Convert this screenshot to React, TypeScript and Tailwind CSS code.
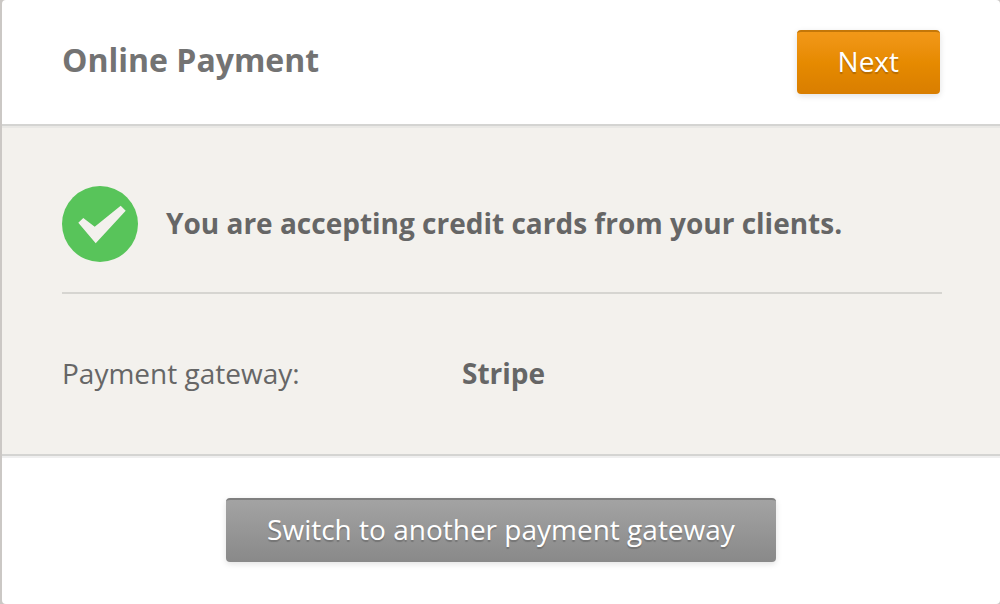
function CheckBadge() {
  return (
    <svg viewBox="0 0 76 76" className="size-[76px] shrink-0" aria-hidden="true">
      <circle cx="38" cy="38" r="38" fill="#58c45a" />
      <path d="M16.3 36.7 21.3 32 32.7 40.7 58.7 19.7 63.7 24.7 33.7 57.3Z" fill="#f3f1ed" />
    </svg>
  );
}

const buttonBase =
  'h-16 px-[41px] pb-1 rounded-[4px] border-t-2 bg-linear-to-b text-[28px] leading-[38px] text-white cursor-pointer shadow-[0_2px_6px_rgba(0,0,0,0.12)] text-shadow-[0_2px_1px_rgba(0,0,0,0.2)]';

export default function App() {
  return (
    <div className="min-h-screen bg-[#cbc8c5] pl-0.5 font-['Open_Sans','Noto_Sans',sans-serif] text-[28px] leading-[38px] text-[#666666]">
      <main className="min-h-screen overflow-hidden rounded-[4px] bg-white">
        {/* Header */}
        <header className="flex items-center justify-between px-[60px] py-[30px]">
          <h1 className="pb-1 text-[32px] leading-[44px] font-bold text-[#737373]">Online Payment</h1>
          <button
            type="button"
            className={`${buttonBase} border-[#c47708] from-[#f29818] via-[#e68a00] to-[#d97e00]`}
          >
            Next
          </button>
        </header>

        {/* Gateway status */}
        <section className="border-y-2 border-[#d4d4d2] bg-[#f3f1ed] pt-[60px] pr-[58px] pb-[62px] pl-[60px] shadow-[inset_0_2px_0_#e9e8e5,0_2px_0_#efefef]">
          <div className="flex items-center gap-7 border-b-2 border-[#d6d5d1] pb-[30px]">
            <CheckBadge />
            <p className="pb-0.5 font-bold">You are accepting credit cards from your clients.</p>
          </div>
          <dl className="flex pt-[60px]">
            <dt className="w-[400px]">Payment gateway:</dt>
            <dd className="font-bold">Stripe</dd>
          </dl>
        </section>

        {/* Footer */}
        <footer className="flex justify-center px-[60px] py-[42px]">
          <button
            type="button"
            className={`${buttonBase} border-[#7f7f7f] from-[#a3a3a3] to-[#898989]`}
          >
            Switch to another payment gateway
          </button>
        </footer>
      </main>
    </div>
  );
}
